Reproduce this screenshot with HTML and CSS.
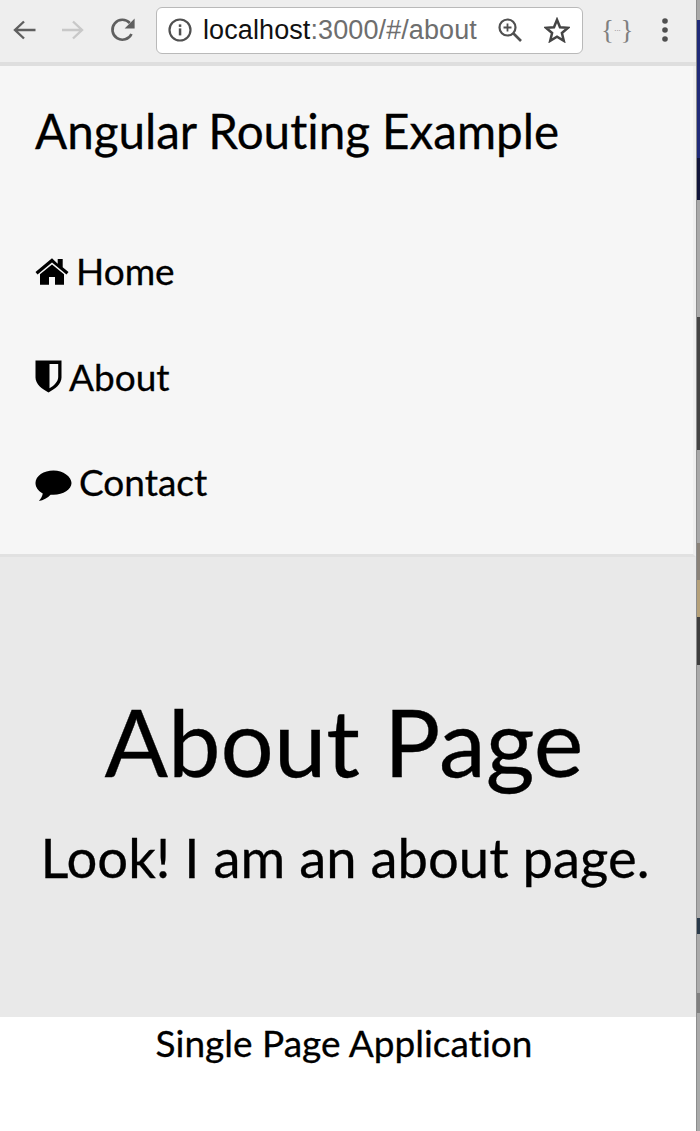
FILE: index.html
```html
<!DOCTYPE html>
<html lang="en">
<head>
<meta charset="utf-8">
<title>Angular Routing Example</title>
<link rel="stylesheet" href="styles.css">
</head>
<body>
<div class="window">
  <div class="browser">
    <header class="chrome">
      <svg class="tb-icon back" width="24" height="24" viewBox="0 0 24 24"><path d="M23.500 12H3M12 3.500L3 12l9 8.500" fill="none" stroke="#5f5f5f" stroke-width="2.400"/></svg>
      <svg class="tb-icon fwd" width="24" height="24" viewBox="0 0 24 24"><path d="M1 12h20M12 3.500l9 8.500-9 8.500" fill="none" stroke="#c8c8c8" stroke-width="2.400"/></svg>
      <svg class="tb-icon reload" width="26" height="26" viewBox="0 0 26 26"><path d="M21.500 17A10 10 0 1 1 19.800 6" fill="none" stroke="#5f5f5f" stroke-width="2.600"/><path d="M24.600 1.500v10h-10z" fill="#5f5f5f"/></svg>
      <div class="omnibox">
        <svg class="info" width="24" height="24" viewBox="0 0 24 24"><circle cx="12" cy="12" r="10.500" fill="none" stroke="#505050" stroke-width="2.200"/><rect x="10.800" y="10.400" width="2.500" height="7" fill="#505050"/><rect x="10.800" y="6.400" width="2.500" height="2.500" fill="#505050"/></svg>
        <span class="url"><span class="host">localhost</span>:3000/#/about</span>
        <svg class="zoom" width="26" height="26" viewBox="0 0 26 26"><circle cx="10.500" cy="10.500" r="8" fill="none" stroke="#505050" stroke-width="2.200"/><path d="M16.500 16.500l7.500 7.500" stroke="#505050" stroke-width="2.600"/><path d="M6.500 10.500h8M10.500 6.500v8" stroke="#505050" stroke-width="1.800"/></svg>
        <svg class="star" width="26" height="26" viewBox="0 0 26 26"><path d="M13 2.800l3 7.400 8 .6-6.100 5.200 1.900 7.800L13 19.600l-6.800 4.200 1.900-7.800L2 10.800l8-.6z" fill="none" stroke="#444" stroke-width="2.500"/></svg>
      </div>
      <span class="ext"><span class="brace">{</span><span class="ext-dots">···</span><span class="brace">}</span></span>
      <svg class="menu" width="8" height="26" viewBox="0 0 8 26"><circle cx="4" cy="4" r="2.800" fill="#4f4f4f"/><circle cx="4" cy="13" r="2.800" fill="#4f4f4f"/><circle cx="4" cy="22" r="2.800" fill="#4f4f4f"/></svg>
    </header>
    <nav class="navbar">
      <div class="brand">Angular Routing Example</div>
      <ul class="nav-list">
        <li class="nav-item">
          <svg class="ic-home" width="34" height="28" viewBox="0 0 34 28"><path d="M17 1.200L.5 15l2 2.500L17 5.600l14.500 11.900 2-2.500-5.800-4.800V2h-5v4.800z" fill="#000"/><path d="M17 7.500L5 17.300V27.800h9v-7.800h6v7.800h9V17.300z" fill="#000"/></svg>
          <span>Home</span>
        </li>
        <li class="nav-item">
          <svg class="ic-shield" width="27" height="33" viewBox="0 0 27 33"><path fill-rule="evenodd" d="M.5 .5h26v17c0 6.500-6.500 11.500-13 15C7 29 .5 24 .5 17.500zM14.500 4v24.300c4.200-2.500 8.700-6.300 8.700-11.300V4z" fill="#000"/></svg>
          <span>About</span>
        </li>
        <li class="nav-item">
          <svg class="ic-chat" width="37" height="34" viewBox="0 0 38 34"><path d="M19 1C9 1 .5 6.500.5 14c0 4.500 3 8.300 7.500 10.700-.5 3-2 5.500-4 7.800 4.500-.8 9-3.400 12-6.600 1 .1 2 .1 3 .1 10 0 18.500-5.400 18.500-12S29 1 19 1z" fill="#000"/></svg>
          <span>Contact</span>
        </li>
      </ul>
    </nav>
    <main class="jumbotron">
      <h1 class="title">About Page</h1>
      <p class="lead">Look! I am an about page.</p>
    </main>
    <footer class="footer">Single Page Application</footer>
  </div>
  <div class="sliver">
    <div class="s s1"></div><div class="s s2"></div><div class="s s3"></div><div class="s s4"></div><div class="s s5"></div><div class="s s6"></div><div class="s s7"></div><div class="s s8"></div><div class="s s9"></div><div class="s s10"></div><div class="s s11"></div><div class="s s12"></div><div class="s s13"></div><div class="s s14"></div>
  </div>
</div>
</body>
</html>
```
FILE: styles.css
```css
* { box-sizing: border-box; }
html, body { margin: 0; padding: 0; height: 100%; }
body { background: #fff; font-family: "Lato", "Liberation Sans", sans-serif; font-variant-ligatures: none; -webkit-text-stroke: 0.3px #000; color: #000; overflow: hidden; }
.window { display: flex; height: 1131px; width: 700px; }
.browser { width: 696px; flex: none; display: flex; flex-direction: column; }
.chrome { height: 66px; flex: none; background: #eeeeee; border-bottom: 4px solid #dedede; display: flex; align-items: center; padding: 0 0 2px 12px; -webkit-text-stroke: 0; }
.tb-icon { flex: none; }
.fwd { margin-left: 25px; }
.reload { margin-left: 25px; }
.omnibox { width: 427px; height: 47px; margin-left: 20px; background: #fff; border: 1px solid #b9b9b9; border-radius: 6px; display: flex; align-items: center; padding: 0 11px; flex: none; }
.info { flex: none; }
.url { font-family: "Liberation Sans", sans-serif; font-size: 27px; letter-spacing: 0.1px; color: #6e6e6e; margin-left: 11px; white-space: nowrap; flex: none; width: 275px; }
.host { color: #111; }
.zoom { margin-left: 19px; flex: none; }
.star { margin-left: 21px; flex: none; }
.ext { font-family: "Liberation Serif", serif; font-size: 27px; color: #7f7f7f; margin-left: 18px; white-space: nowrap; display: flex; align-items: center; }
.ext-dots { font-size: 8px; letter-spacing: -0.5px; }
.menu { margin-left: 28px; flex: none; }
.navbar { background: #f6f6f6; height: 491px; flex: none; border-bottom: 3px solid #e1e1e1; border-right: 3px solid #efefef; padding: 0 32px 0 35px; }
.brand { font-size: 47.600px; line-height: 56px; margin-top: 37px; height: 56px; white-space: nowrap; }
.nav-list { list-style: none; margin: 92px 0 0; padding: 0; display: flex; flex-direction: column; gap: 65.500px; }
.nav-item { font-size: 37px; line-height: 40px; height: 40px; display: flex; align-items: center; gap: 7px; }
.ic-chat { margin-top: 8px; }
.jumbotron { background: #e9e9e9; height: 460px; flex: none; text-align: center; padding: 129px 8px 0 0; }
.title { font-weight: 400; font-size: 94px; line-height: 110px; margin: 0; }
.lead { font-size: 54.400px; line-height: 66px; margin: 28px -2px 0 0; white-space: nowrap; }
.footer { text-align: center; font-size: 37px; line-height: 52px; flex: 1; background: #fff; padding-right: 8px; }
.sliver { width: 4px; flex: none; display: flex; flex-direction: column; border-left: 1px solid #8d8d8d; }
.s { flex: none; }
.s1 { height: 20px; background: #a8a8a8; }
.s2 { height: 138px; background: #1f2a78; }
.s3 { height: 42px; background: #10143a; }
.s4 { height: 117px; background: #a9a9a9; }
.s5 { height: 133px; background: #444; }
.s6 { height: 93px; background: #a8a8a8; }
.s7 { height: 37px; background: #8a8278; }
.s8 { height: 37px; background: #b5a078; }
.s9 { height: 48px; background: #3e3e3e; }
.s10 { height: 253px; background: #aaa; }
.s11 { height: 16px; background: #2a3a4a; }
.s12 { height: 59px; background: #aaa; }
.s13 { height: 20px; background: #808080; }
.s14 { height: 118px; background: #aaa; }
```
